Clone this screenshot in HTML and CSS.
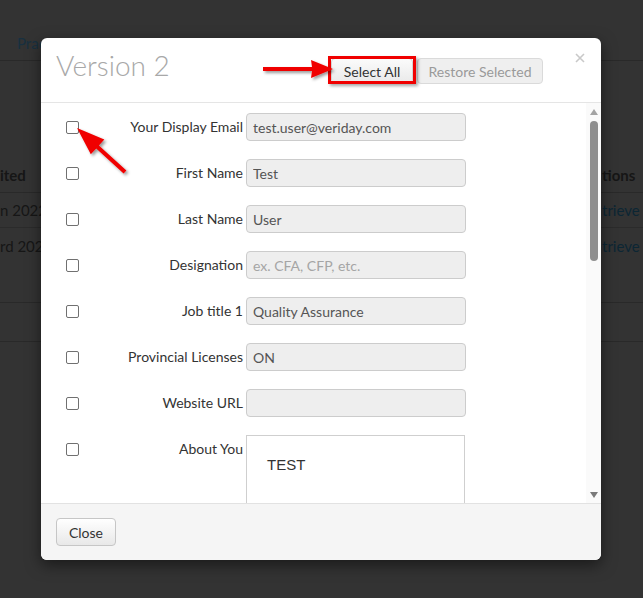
FILE: index.html
```html
<!DOCTYPE html>
<html>
<head>
<meta charset="utf-8">
<link rel="stylesheet" href="styles.css">
</head>
<body>
<div class="page">
  <div class="bgnav"><span class="bglink">Prac</span></div>
  <div class="bgtable">
    <div class="bgrow head"><span class="c1">ited</span><span class="c2">tions</span></div>
    <div class="bgrow line"><span class="c1">n 2022</span><span class="c2 link">trieve I</span></div>
    <div class="bgrow"><span class="c1">rd 2020</span><span class="c2 link">trieve I</span></div>
  </div>
  <div class="bgbar"></div>
</div>

<div class="modal">
  <div class="mhead">
    <h2 class="mtitle">Version 2</h2>
    <div class="btns">
      <button class="btn sel">Select All</button>
      <button class="btn dis">Restore Selected</button>
    </div>
    <svg class="xbtn" width="10" height="10" viewBox="0 0 10 10"><path d="M1 1L9 9M9 1L1 9" stroke="#c9c9c9" stroke-width="1.6" fill="none"/></svg>
  </div>
  <div class="mbody">
    <div class="form">
      <div class="row"><span class="cbw"><input type="checkbox" class="cb"></span><label class="lbl">Your Display Email</label><input class="inp" type="text" value="test.user@veriday.com"></div>
      <div class="row"><span class="cbw"><input type="checkbox" class="cb"></span><label class="lbl">First Name</label><input class="inp" type="text" value="Test"></div>
      <div class="row"><span class="cbw"><input type="checkbox" class="cb"></span><label class="lbl">Last Name</label><input class="inp" type="text" value="User"></div>
      <div class="row"><span class="cbw"><input type="checkbox" class="cb"></span><label class="lbl">Designation</label><input class="inp" type="text" placeholder="ex. CFA, CFP, etc."></div>
      <div class="row"><span class="cbw"><input type="checkbox" class="cb"></span><label class="lbl">Job title 1</label><input class="inp" type="text" value="Quality Assurance"></div>
      <div class="row"><span class="cbw"><input type="checkbox" class="cb"></span><label class="lbl">Provincial Licenses</label><input class="inp" type="text" value="ON"></div>
      <div class="row"><span class="cbw"><input type="checkbox" class="cb"></span><label class="lbl">Website URL</label><input class="inp" type="text" value=""></div>
      <div class="row tall"><span class="cbw"><input type="checkbox" class="cb"></span><label class="lbl">About You</label><div class="area">TEST</div></div>
    </div>
    <div class="sbar">
      <span class="sup"></span>
      <span class="thumb"></span>
      <span class="sfill"></span>
      <span class="sdown"></span>
    </div>
  </div>
  <div class="mfoot"><button class="btn close">Close</button></div>
</div>

<svg class="arrows" width="643" height="598" viewBox="0 0 643 598">
  <defs>
    <filter id="sh" x="-20%" y="-20%" width="150%" height="150%">
      <feDropShadow dx="2" dy="2" stdDeviation="1.5" flood-color="#000" flood-opacity="0.4"/>
    </filter>
  </defs>
  <g fill="#f00000" filter="url(#sh)">
    <polygon points="263,67 312,67 311,60 333,69 311,78 312,71 263,71"/>
    <polygon points="77,128 104.3,139.5 98.9,145.4 126.4,170.5 123.6,173.5 96.2,148.4 90.8,154.3"/>
  </g>
</svg>
</body>
</html>
```

FILE: styles.css
```css
html, body {
  margin: 0;
  padding: 0;
}
body {
  width: 643px;
  height: 598px;
  overflow: hidden;
  background: #333333;
  font-family: Lato, "Open Sans", sans-serif;
  font-size: 14px;
  position: relative;
}

/* dimmed background page */
.page {
  width: 643px;
}
.bgnav {
  box-sizing: border-box;
  height: 61px;
  border-bottom: 1px solid #292929;
  padding: 34px 0 0 17px;
  line-height: 18px;
}
.bglink {
  color: #183040;
  font-size: 15px;
}
.bgtable {
  margin-top: 96px;
}
.bgrow {
  display: flex;
  height: 35px;
  align-items: center;
  color: #161616;
  font-size: 15px;
}
.bgrow.head {
  border-bottom: 1px solid #292929;
  font-weight: 700;
}
.bgrow.line {
  height: 34px;
  border-bottom: 1px solid #2b2b2b;
}
.c1 {
  width: 602px;
  flex: none;
  white-space: nowrap;
}
.c2 {
  white-space: nowrap;
}
.c2.link {
  color: #0c2634;
}
.bgbar {
  margin-top: 39px;
  height: 38px;
  border-top: 1px solid #292929;
  border-bottom: 1px solid #292929;
}

/* modal */
.modal {
  position: absolute;
  left: 41px;
  top: 38px;
  width: 560px;
  height: 522px;
  background: #fff;
  border-radius: 6px;
  box-shadow: 0 5px 15px rgba(0, 0, 0, 0.5);
  display: flex;
  flex-direction: column;
  overflow: hidden;
}
.mhead {
  height: 64px;
  flex: none;
  border-bottom: 1px solid #e5e5e5;
  display: flex;
  align-items: flex-start;
  padding: 0 16px 0 15px;
}
.mtitle {
  margin: 13px 0 0 0;
  font-family: Lato, sans-serif;
  font-weight: 300;
  font-size: 28px;
  line-height: 28px;
  color: #a8a8a8;
}
.btns {
  margin-left: auto;
  margin-top: 20px;
  margin-right: 32px;
  display: flex;
}
.btn {
  font-family: Lato, sans-serif;
  font-size: 14px;
  height: 26px;
  padding: 0 12px;
  border-radius: 4px;
  border: 1px solid #d3d3d3;
  background: linear-gradient(#fbfbfb, #e9e9e9);
  color: #333;
  cursor: default;
}
.btn.sel {
  position: relative;
  margin-right: 4px;
  width: 82px;
  padding: 0;
}
.btn.sel::after {
  content: "";
  position: absolute;
  left: -4px;
  right: -4px;
  top: -3px;
  bottom: -1px;
  border: 3px solid #f00000;
  box-shadow: 2px 2px 3px rgba(0, 0, 0, 0.35);
}
.btn.dis {
  background: #efefef;
  border-color: #dadada;
  color: #9a9a9a;
  width: 126px;
  padding: 0;
}
.xbtn {
  margin-top: 15px;
  flex: none;
}

.mbody {
  height: 400px;
  flex: none;
  display: flex;
}
.form {
  flex: 1;
  overflow: hidden;
  padding-top: 10px;
}
.row {
  display: flex;
  align-items: flex-start;
  height: 28px;
  margin-bottom: 18px;
}
.cbw {
  height: 28px;
  display: flex;
  align-items: center;
  margin-left: 25px;
  width: 13px;
  flex: none;
}
.cb {
  appearance: none;
  -webkit-appearance: none;
  width: 13px;
  height: 13px;
  margin: 0;
  border: 1px solid #707070;
  border-radius: 2px;
  background: #fff;
  box-sizing: border-box;
}
.lbl {
  width: 164px;
  flex: none;
  text-align: right;
  line-height: 27px;
  margin-right: 3px;
  color: #333;
  white-space: nowrap;
}
.inp {
  width: 220px;
  height: 28px;
  box-sizing: border-box;
  margin: 0;
  background: #eeeeee;
  border: 1px solid #cccccc;
  border-radius: 4px;
  padding: 0 6px;
  font-family: Lato, sans-serif;
  font-size: 14px;
  color: #555;
  outline: none;
}
.inp::placeholder {
  color: #a5a5a5;
}
.area {
  width: 219px;
  height: 140px;
  box-sizing: border-box;
  border: 1px solid #cfcfcf;
  background: #fff;
  padding: 20px 20px;
  font-family: "Liberation Sans", Arial, sans-serif;
  font-size: 15px;
  color: #333;
  flex: none;
}

.sbar {
  width: 15px;
  flex: none;
  background: #fafafa;
  display: flex;
  flex-direction: column;
  align-items: center;
  padding: 6px 0 5px;
  box-sizing: border-box;
}
.sup {
  width: 0;
  height: 0;
  border-left: 4.5px solid transparent;
  border-right: 4.5px solid transparent;
  border-bottom: 6px solid #a3a3a3;
  margin-bottom: 6px;
}
.thumb {
  width: 8px;
  height: 140px;
  border-radius: 4px;
  background: #8f8f8f;
}
.sfill {
  flex: 1;
}
.sdown {
  width: 0;
  height: 0;
  border-left: 4.5px solid transparent;
  border-right: 4.5px solid transparent;
  border-top: 6px solid #7a7a7a;
}

.mfoot {
  flex: 1;
  background: #f5f5f5;
  border-top: 1px solid #e2e2e2;
  padding: 14px 15px;
}
.btn.close {
  height: 28px;
  width: 60px;
  padding: 0;
  border-color: #c6c6c6;
  background: linear-gradient(#ffffff, #e8e8e8);
}

.arrows {
  position: absolute;
  left: 0;
  top: 0;
  pointer-events: none;
}
```
